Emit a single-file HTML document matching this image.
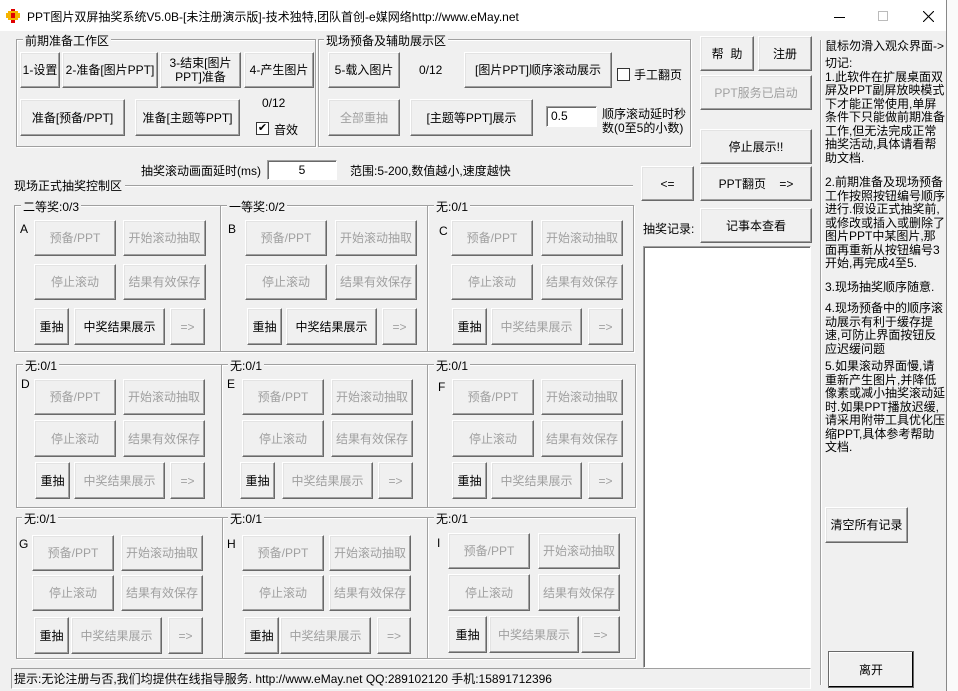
<!DOCTYPE html>
<html><head><meta charset="utf-8">
<style>
*{box-sizing:border-box;margin:0;padding:0}
body{width:958px;height:691px;position:relative;background:#fafafa;font-family:"Liberation Sans","Noto Sans CJK SC",sans-serif;font-size:12px;color:#000;overflow:hidden}
#win{position:absolute;left:0;top:0;width:947px;height:691px;background:#f0f0f0;border-right:1px solid #888}
#tb{position:absolute;left:0;top:0;width:946px;height:31px;background:#fff}
.a{position:absolute;white-space:nowrap}
.b{position:absolute;background:#f0f0f0;border:1px solid;border-color:#fff #696969 #696969 #fff;box-shadow:inset -1px -1px #a0a0a0,inset 1px 1px #e3e3e3;display:flex;align-items:center;justify-content:center;text-align:center;line-height:14px;font-size:12px}
.d{color:#a0a0a0}
.g{position:absolute;border:1px solid #a0a0a0;box-shadow:1px 1px #fff, inset 1px 1px #fff}
.gl{position:absolute;background:#f0f0f0;padding:0 2px;white-space:nowrap}
.in{position:absolute;background:#fff;border:1px solid;border-color:#a0a0a0 #fff #fff #a0a0a0;box-shadow:inset 1px 1px #696969;font-size:12px;padding:2px 4px}
.cb{position:absolute;width:13px;height:13px;background:#fff;border:1px solid #333}
.p{position:absolute;left:825px;line-height:13.5px;white-space:nowrap}
</style></head><body>
<div id="win">
<div id="tb">
 <div class="a" style="left:6px;top:9px;width:14px;height:14px">
  <div style="position:absolute;left:0;top:4px;width:14px;height:5px;background:#f5b400"></div>
  <div style="position:absolute;left:5px;top:0;width:4px;height:14px;background:#e00000"></div>
  <div style="position:absolute;left:2px;top:2px;width:10px;height:9px;border:2px solid #f5b400"></div>
 </div>
 <div class="a" style="left:27px;top:8px;font-size:12px">PPT图片双屏抽奖系统V5.0B-[未注册演示版]-技术独特,团队首创-e媒网络http://www.eMay.net</div>
 <div class="a" style="left:834px;top:17px;width:11px;height:1px;background:#000"></div>
 <div class="a" style="left:878px;top:11px;width:10px;height:10px;border:1px solid #bbb"></div>
 <svg class="a" style="left:923px;top:11px" width="11" height="11"><path d="M0 0L11 11M11 0L0 11" stroke="#000" stroke-width="1.1"/></svg>
</div>

<!-- group 1 -->
<div class="g" style="left:16px;top:39px;width:300px;height:108px"></div>
<div class="gl" style="left:23px;top:32px">前期准备工作区</div>
<div class="b" style="left:20px;top:52px;width:40px;height:36px">1-设置</div>
<div class="b" style="left:62px;top:52px;width:96px;height:36px">2-准备[图片PPT]</div>
<div class="b" style="left:160px;top:52px;width:81px;height:36px">3-结束[图片<br>PPT]准备</div>
<div class="b" style="left:244px;top:52px;width:70px;height:36px">4-产生图片</div>
<div class="b" style="left:20px;top:99px;width:105px;height:37px">准备[预备/PPT]</div>
<div class="b" style="left:135px;top:99px;width:105px;height:37px">准备[主题等PPT]</div>
<div class="a" style="left:262px;top:96px">0/12</div>
<div class="cb" style="left:256px;top:122px;font-size:11px;line-height:11px;text-align:center">✔</div>
<div class="a" style="left:274px;top:121px">音效</div>

<!-- group 2 -->
<div class="g" style="left:318px;top:39px;width:373px;height:108px"></div>
<div class="gl" style="left:324px;top:32px">现场预备及辅助展示区</div>
<div class="b" style="left:328px;top:52px;width:72px;height:36px">5-载入图片</div>
<div class="a" style="left:419px;top:63px">0/12</div>
<div class="b" style="left:464px;top:52px;width:148px;height:36px">[图片PPT]顺序滚动展示</div>
<div class="cb" style="left:617px;top:68px"></div>
<div class="a" style="left:634px;top:66px">手工翻页</div>
<div class="b d" style="left:328px;top:99px;width:72px;height:37px">全部重抽</div>
<div class="b" style="left:410px;top:99px;width:123px;height:37px">[主题等PPT]展示</div>
<div class="in" style="left:546px;top:106px;width:51px;height:21px">0.5</div>
<div class="a" style="left:602px;top:107px;line-height:14px">顺序滚动延时秒<br>数(0至5的小数)</div>

<!-- right buttons -->
<div class="b" style="left:700px;top:36px;width:54px;height:35px">帮&nbsp;&nbsp;助</div>
<div class="b" style="left:758px;top:36px;width:54px;height:35px">注册</div>
<div class="b d" style="left:700px;top:75px;width:112px;height:35px">PPT服务已启动</div>
<div class="b" style="left:700px;top:129px;width:112px;height:35px">停止展示!!</div>
<div class="b" style="left:641px;top:166px;width:53px;height:35px">&lt;=</div>
<div class="b" style="left:700px;top:166px;width:112px;height:35px">PPT翻页&nbsp;&nbsp;&nbsp;&nbsp;=&gt;</div>
<div class="a" style="left:643px;top:220px">抽奖记录:</div>
<div class="b" style="left:700px;top:208px;width:112px;height:35px">记事本查看</div>
<div class="in" style="left:643px;top:246px;width:168px;height:422px"></div>

<!-- right panel -->
<div class="a" style="left:820px;top:40px;width:1px;height:645px;background:#a0a0a0;box-shadow:1px 0 #fff"></div>
<div class="a" style="left:825px;top:37px">鼠标勿滑入观众界面-&gt;</div>
<div class="p" style="top:57px">切记:<br>1.此软件在扩展桌面双<br>屏及PPT副屏放映模式<br>下才能正常使用,单屏<br>条件下只能做前期准备<br>工作,但无法完成正常<br>抽奖活动,具体请看帮<br>助文档.</div>
<div class="p" style="top:176px">2.前期准备及现场预备<br>工作按照按钮编号顺序<br>进行.假设正式抽奖前,<br>或修改或插入或删除了<br>图片PPT中某图片,那<br>面再重新从按钮编号3<br>开始,再完成4至5.</div>
<div class="p" style="top:281px">3.现场抽奖顺序随意.</div>
<div class="p" style="top:302px">4.现场预备中的顺序滚<br>动展示有利于缓存提<br>速,可防止界面按钮反<br>应迟缓问题</div>
<div class="p" style="top:360px">5.如果滚动界面慢,请<br>重新产生图片,并降低<br>像素或减小抽奖滚动延<br>时.如果PPT播放迟缓,<br>请采用附带工具优化压<br>缩PPT,具体参考帮助<br>文档.</div>
<div class="b" style="left:825px;top:507px;width:83px;height:36px">清空所有记录</div>
<div class="b" style="left:828px;top:651px;width:86px;height:37px;border-color:#696969;box-shadow:inset -1px -1px #000,inset 1px 1px #fff">离开</div>

<!-- delay row -->
<div class="a" style="left:141px;top:162px">抽奖滚动画面延时(ms)</div>
<div class="in" style="left:267px;top:160px;width:70px;height:20px;text-align:center">5</div>
<div class="a" style="left:350px;top:162px">范围:5-200,数值越小,速度越快</div>
<div class="a" style="left:14px;top:177px">现场正式抽奖控制区</div>
<div class="a" style="left:125px;top:185px;width:508px;height:1px;background:#a0a0a0;box-shadow:0 1px #fff"></div>

<!-- row1 groups -->
<div class="g" style="left:14px;top:205px;width:207px;height:147px"></div>
<div class="g" style="left:220px;top:205px;width:208px;height:147px"></div>
<div class="g" style="left:427px;top:205px;width:207px;height:147px"></div>
<div class="gl" style="left:21px;top:198px">二等奖:0/3</div>
<div class="gl" style="left:227px;top:198px">一等奖:0/2</div>
<div class="gl" style="left:434px;top:198px">无:0/1</div>
<div class="a" style="left:20px;top:222px">A</div>
<div class="b d" style="left:34px;top:220px;width:82px;height:36px">预备/PPT</div>
<div class="b d" style="left:123px;top:220px;width:83px;height:36px">开始滚动抽取</div>
<div class="b d" style="left:34px;top:264px;width:82px;height:36px">停止滚动</div>
<div class="b d" style="left:123px;top:264px;width:83px;height:36px">结果有效保存</div>
<div class="b" style="left:34px;top:308px;width:35px;height:37px">重抽</div>
<div class="b" style="left:74px;top:308px;width:91px;height:37px">中奖结果展示</div>
<div class="b d" style="left:170px;top:308px;width:35px;height:37px">=&gt;</div>
<div class="a" style="left:228px;top:222px">B</div>
<div class="b d" style="left:245px;top:220px;width:82px;height:36px">预备/PPT</div>
<div class="b d" style="left:335px;top:220px;width:82px;height:36px">开始滚动抽取</div>
<div class="b d" style="left:245px;top:264px;width:82px;height:36px">停止滚动</div>
<div class="b d" style="left:335px;top:264px;width:82px;height:36px">结果有效保存</div>
<div class="b" style="left:247px;top:308px;width:35px;height:37px">重抽</div>
<div class="b" style="left:286px;top:308px;width:91px;height:37px">中奖结果展示</div>
<div class="b d" style="left:382px;top:308px;width:35px;height:37px">=&gt;</div>
<div class="a" style="left:439px;top:224px">C</div>
<div class="b d" style="left:451px;top:220px;width:82px;height:36px">预备/PPT</div>
<div class="b d" style="left:541px;top:220px;width:82px;height:36px">开始滚动抽取</div>
<div class="b d" style="left:451px;top:264px;width:82px;height:36px">停止滚动</div>
<div class="b d" style="left:541px;top:264px;width:82px;height:36px">结果有效保存</div>
<div class="b" style="left:452px;top:308px;width:35px;height:37px">重抽</div>
<div class="b d" style="left:491px;top:308px;width:91px;height:37px">中奖结果展示</div>
<div class="b d" style="left:588px;top:308px;width:35px;height:37px">=&gt;</div>

<!-- row2 groups -->
<div class="g" style="left:16px;top:364px;width:206px;height:144px"></div>
<div class="g" style="left:221px;top:364px;width:207px;height:144px"></div>
<div class="g" style="left:427px;top:364px;width:209px;height:144px"></div>
<div class="gl" style="left:23px;top:357px">无:0/1</div>
<div class="gl" style="left:228px;top:357px">无:0/1</div>
<div class="gl" style="left:434px;top:357px">无:0/1</div>
<div class="a" style="left:21px;top:377px">D</div>
<div class="b d" style="left:34px;top:379px;width:82px;height:36px">预备/PPT</div>
<div class="b d" style="left:123px;top:379px;width:82px;height:36px">开始滚动抽取</div>
<div class="b d" style="left:34px;top:420px;width:82px;height:37px">停止滚动</div>
<div class="b d" style="left:123px;top:420px;width:82px;height:37px">结果有效保存</div>
<div class="b" style="left:35px;top:462px;width:35px;height:37px">重抽</div>
<div class="b d" style="left:74px;top:462px;width:91px;height:37px">中奖结果展示</div>
<div class="b d" style="left:170px;top:462px;width:35px;height:37px">=&gt;</div>
<div class="a" style="left:227px;top:377px">E</div>
<div class="b d" style="left:242px;top:379px;width:82px;height:36px">预备/PPT</div>
<div class="b d" style="left:331px;top:379px;width:82px;height:36px">开始滚动抽取</div>
<div class="b d" style="left:242px;top:420px;width:82px;height:37px">停止滚动</div>
<div class="b d" style="left:331px;top:420px;width:82px;height:37px">结果有效保存</div>
<div class="b" style="left:240px;top:462px;width:35px;height:37px">重抽</div>
<div class="b d" style="left:282px;top:462px;width:91px;height:37px">中奖结果展示</div>
<div class="b d" style="left:378px;top:462px;width:35px;height:37px">=&gt;</div>
<div class="a" style="left:438px;top:380px">F</div>
<div class="b d" style="left:452px;top:379px;width:82px;height:36px">预备/PPT</div>
<div class="b d" style="left:541px;top:379px;width:82px;height:36px">开始滚动抽取</div>
<div class="b d" style="left:452px;top:420px;width:82px;height:37px">停止滚动</div>
<div class="b d" style="left:541px;top:420px;width:82px;height:37px">结果有效保存</div>
<div class="b" style="left:452px;top:462px;width:35px;height:37px">重抽</div>
<div class="b d" style="left:491px;top:462px;width:91px;height:37px">中奖结果展示</div>
<div class="b d" style="left:588px;top:462px;width:35px;height:37px">=&gt;</div>

<!-- row3 groups -->
<div class="g" style="left:16px;top:517px;width:207px;height:142px"></div>
<div class="g" style="left:222px;top:517px;width:206px;height:142px"></div>
<div class="g" style="left:427px;top:517px;width:209px;height:142px"></div>
<div class="gl" style="left:22px;top:510px">无:0/1</div>
<div class="gl" style="left:228px;top:510px">无:0/1</div>
<div class="gl" style="left:434px;top:510px">无:0/1</div>
<div class="a" style="left:19px;top:537px">G</div>
<div class="b d" style="left:32px;top:535px;width:82px;height:36px">预备/PPT</div>
<div class="b d" style="left:121px;top:535px;width:82px;height:36px">开始滚动抽取</div>
<div class="b d" style="left:32px;top:575px;width:82px;height:36px">停止滚动</div>
<div class="b d" style="left:121px;top:575px;width:82px;height:36px">结果有效保存</div>
<div class="b" style="left:34px;top:617px;width:35px;height:37px">重抽</div>
<div class="b d" style="left:71px;top:617px;width:91px;height:37px">中奖结果展示</div>
<div class="b d" style="left:168px;top:617px;width:35px;height:37px">=&gt;</div>
<div class="a" style="left:227px;top:537px">H</div>
<div class="b d" style="left:242px;top:535px;width:82px;height:36px">预备/PPT</div>
<div class="b d" style="left:329px;top:535px;width:82px;height:36px">开始滚动抽取</div>
<div class="b d" style="left:242px;top:575px;width:82px;height:36px">停止滚动</div>
<div class="b d" style="left:329px;top:575px;width:82px;height:36px">结果有效保存</div>
<div class="b" style="left:244px;top:617px;width:35px;height:37px">重抽</div>
<div class="b d" style="left:280px;top:617px;width:91px;height:37px">中奖结果展示</div>
<div class="b d" style="left:377px;top:617px;width:34px;height:37px">=&gt;</div>
<div class="a" style="left:437px;top:536px">I</div>
<div class="b d" style="left:448px;top:533px;width:82px;height:36px">预备/PPT</div>
<div class="b d" style="left:538px;top:533px;width:82px;height:36px">开始滚动抽取</div>
<div class="b d" style="left:448px;top:574px;width:82px;height:37px">停止滚动</div>
<div class="b d" style="left:538px;top:574px;width:82px;height:37px">结果有效保存</div>
<div class="b" style="left:448px;top:616px;width:39px;height:37px">重抽</div>
<div class="b d" style="left:489px;top:616px;width:90px;height:37px">中奖结果展示</div>
<div class="b d" style="left:581px;top:616px;width:39px;height:37px">=&gt;</div>

<!-- status -->
<div class="a" style="left:11px;top:668px;width:800px;height:21px;border:1px solid;border-color:#a0a0a0 #fff #fff #a0a0a0"></div>
<div class="a" style="left:14px;top:670px">提示:无论注册与否,我们均提供在线指导服务. http://www.eMay.net QQ:289102120 手机:15891712396</div>
</div>
</body></html>
